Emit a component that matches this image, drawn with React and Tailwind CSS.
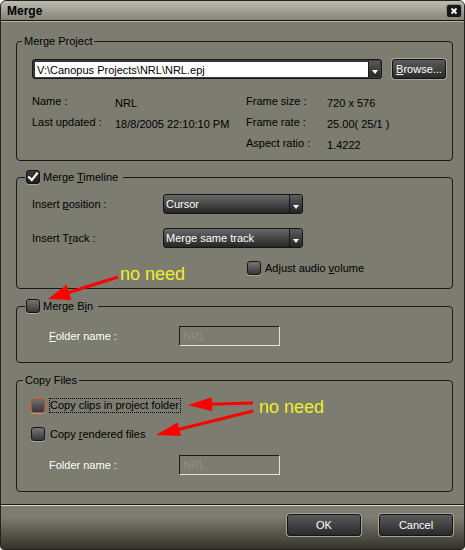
import React from "react";

function Check({ checked = false, focus = false }) {
  const cls = focus
    ? "border-[#c8461a] from-[#6e6e6e] to-[#363636]"
    : checked
    ? "border-[#141414] from-[#3c3c3c] to-[#1c1c1c]"
    : "border-[#141414] from-[#767676] to-[#383838]";
  return (
    <span
      className={`w-[14px] h-[14px] shrink-0 rounded-[3px] border bg-gradient-to-b ${cls} flex items-center justify-center shadow-[0_1px_0_#a8a89c]`}
    >
      {checked && (
        <svg width="12" height="12" viewBox="0 0 12 12">
          <path d="M2 6.2 L4.8 9 L10 2.5" stroke="white" strokeWidth="2.2" fill="none" strokeLinecap="square" />
        </svg>
      )}
    </span>
  );
}

function DownArrow() {
  return (
    <svg width="6" height="4" viewBox="0 0 6 4">
      <path d="M0 0 H6 L3 4 Z" fill="white" />
    </svg>
  );
}

function Drop({ text }) {
  return (
    <div className="w-[140px] h-[20px] rounded-[3px] border border-[#141414] bg-gradient-to-b from-[#6a6a6a] to-[#262626] flex overflow-hidden">
      <span className="flex-1 text-white pl-[2px] leading-[18px]">{text}</span>
      <span className="w-[13px] border-l border-[#141414] bg-gradient-to-b from-[#5e5e5e] to-[#242424] flex items-end justify-center pb-[4px]">
        <DownArrow />
      </span>
    </div>
  );
}

function Field() {
  return (
    <div className="w-[101px] h-[20px] border border-t-[#1c1c1c] border-l-[#1c1c1c] border-r-[#e4e4dc] border-b-[#e4e4dc] pl-[3px] leading-[18px] text-[#8e8e84]">
      NRL
    </div>
  );
}

function Btn({ children, w = "w-[74px]", h = "h-[22px]" }) {
  return (
    <div
      className={`${w} ${h} shrink-0 rounded-[3px] border border-[#141414] bg-gradient-to-b from-[#5c5c5c] to-[#2a2a2a] text-white flex items-center justify-center shadow-[0_0_0_1px_#a4a498]`}
    >
      {children}
    </div>
  );
}

function Arrow({ x1, y1, x2, y2, len, hw }) {
  const dx = x2 - x1;
  const dy = y2 - y1;
  const L = Math.hypot(dx, dy);
  const ux = dx / L;
  const uy = dy / L;
  const bx = x2 - ux * len;
  const by = y2 - uy * len;
  const px = -uy * hw;
  const py = ux * hw;
  return (
    <g>
      <line x1={x1} y1={y1} x2={bx + ux * 2} y2={by + uy * 2} stroke="#ff0000" strokeWidth="3" />
      <polygon points={`${x2},${y2} ${bx + px},${by + py} ${bx - px},${by - py}`} fill="#ff0000" />
    </g>
  );
}

export default function App() {
  return (
    <div className="relative w-[465px] h-[550px] font-['Liberation_Sans',Arial,sans-serif] text-[11px] text-black">
      <div className="w-full h-full flex flex-col bg-[#7c7c70] border border-[#24241e] rounded-t-[6px] rounded-b-[4px] overflow-hidden">
        {/* Title bar */}
        <div className="h-[19px] shrink-0 flex items-center justify-between pl-[6px] pr-[2px] bg-gradient-to-b from-[#bcbcb0] to-[#84847a]">
          <span className="font-bold text-[12px] leading-none">Merge</span>
          <span className="w-[16px] h-[14px] rounded-[3px] bg-[#161616] border border-[#8c8c82] flex items-center justify-center">
            <svg width="8" height="8" viewBox="0 0 8 8">
              <path d="M1.5 1.5 L6.5 6.5 M6.5 1.5 L1.5 6.5" stroke="white" strokeWidth="1.8" />
            </svg>
          </span>
        </div>
        <div className="h-px shrink-0 bg-[#16160f]" />
        <div className="h-px shrink-0 bg-[#b4b4aa]" />

        {/* Groups */}
        <div className="h-[482px] shrink-0 flex flex-col pl-[15px] pr-[11px] pt-[12px]">
          {/* Merge Project */}
          <fieldset className="h-[127px] shrink-0 border border-[#1a1a16] rounded-[4px] p-0 m-0 min-w-0">
            <legend className="ml-[5px] px-[2px] leading-[14px]">Merge Project</legend>
            <div className="pl-[15px] pr-[5px]">
              <div className="mt-[11px] flex gap-[10px]">
                <div className="w-[350px] h-[20px] rounded-[3px] border border-[#181818] bg-[#3c3c3c] flex p-[1px]">
                  <div className="flex-1 bg-white border-t border-l border-[#303030] pl-[2px] leading-[16px] text-black whitespace-nowrap overflow-hidden">
                    V:\Canopus Projects\NRL\NRL.epj
                  </div>
                  <div className="w-[12px] bg-gradient-to-b from-[#5a5a5a] to-[#262626] border-l border-[#181818] flex items-end justify-center pb-[3px]">
                    <DownArrow />
                  </div>
                </div>
                <Btn w="w-[54px]" h="h-[20px]">
                  <span>
                    <span className="underline">B</span>rowse...
                  </span>
                </Btn>
              </div>
              <div className="mt-[13px] grid grid-cols-[83px_131px_81px_1fr] auto-rows-[21px] leading-[19px] whitespace-nowrap">
                <span>Name :</span>
                <span className="pt-[2px]">NRL</span>
                <span>Frame size :</span>
                <span className="pt-[2px]">720 x 576</span>
                <span>Last updated :</span>
                <span className="pt-[2px]">18/8/2005 22:10:10 PM</span>
                <span>Frame rate :</span>
                <span className="pt-[2px] whitespace-pre">25.00( 25/1 )</span>
                <span></span>
                <span></span>
                <span>Aspect ratio :</span>
                <span className="pt-[2px]">1.4222</span>
              </div>
            </div>
          </fieldset>

          {/* Merge Timeline */}
          <fieldset className="mt-[9px] h-[119px] shrink-0 border border-[#1a1a16] rounded-[4px] p-0 min-w-0">
            <legend className="ml-[8px] pl-[1px] pr-[5px]">
              <span className="flex items-center gap-[3px] leading-[14px]">
                <Check checked />
                <span>
                  Merge <span className="underline">T</span>imeline
                </span>
              </span>
            </legend>
            <div className="pl-[15px]">
              <div className="mt-[10px] flex items-center h-[20px]">
                <span className="w-[131px]">
                  Insert <span className="underline">p</span>osition :
                </span>
                <Drop text="Cursor" />
              </div>
              <div className="mt-[14px] flex items-center h-[20px]">
                <span className="w-[131px]">
                  Insert T<span className="underline">r</span>ack :
                </span>
                <Drop text="Merge same track" />
              </div>
              <div className="mt-[13px] flex items-center gap-[4px] pl-[215px] leading-[14px]">
                <Check />
                <span>
                  Adjust audio <span className="underline">v</span>olume
                </span>
              </div>
            </div>
          </fieldset>

          {/* Merge Bin */}
          <fieldset className="mt-[10px] h-[64px] shrink-0 border border-[#1a1a16] rounded-[4px] p-0 min-w-0">
            <legend className="ml-[8px] pl-[1px] pr-[5px]">
              <span className="flex items-center gap-[3px] leading-[14px]">
                <Check />
                <span>
                  Merge B<span className="underline">i</span>n
                </span>
              </span>
            </legend>
            <div className="pl-[32px] mt-[13px] flex items-center">
              <span className="w-[130px] text-white">
                <span className="underline">F</span>older name :
              </span>
              <Field />
            </div>
          </fieldset>

          {/* Copy Files */}
          <fieldset className="mt-[10px] h-[119px] shrink-0 border border-[#1a1a16] rounded-[4px] p-0 min-w-0">
            <legend className="ml-[6px] px-[2px] leading-[14px]">Copy Files</legend>
            <div className="pl-[14px]">
              <div className="mt-[11px] flex items-center h-[15px] gap-[4px]">
                <Check focus />
                <span className="h-[15px] border border-dotted border-black leading-[13px] pr-[1px]">
                  Copy clips in project folder
                </span>
              </div>
              <div className="mt-[14px] flex items-center gap-[5px] leading-[14px]">
                <Check />
                <span>
                  Copy <span className="underline">r</span>endered files
                </span>
              </div>
              <div className="mt-[14px] pl-[18px] flex items-center">
                <span className="w-[130px] text-white">Folder name :</span>
                <Field />
              </div>
            </div>
          </fieldset>
        </div>

        <div className="h-px shrink-0 bg-[#16160f]" />
        <div className="h-px shrink-0 bg-[#dcdcd4]" />

        {/* Bottom buttons */}
        <div className="flex-1 flex justify-end items-start gap-[18px] pt-[8px] pr-[11px] bg-[linear-gradient(to_bottom,#7c7c70_25%,#33332a_100%)]">
          <Btn>OK</Btn>
          <Btn>Cancel</Btn>
        </div>
      </div>

      {/* Annotations */}
      <svg className="absolute inset-0 pointer-events-none" width="465" height="550" viewBox="0 0 465 550">
        <Arrow x1={118} y1={277} x2={48} y2={299} len={22} hw={8} />
        <Arrow x1={253} y1={403} x2={188} y2={405} len={24} hw={7} />
        <Arrow x1={253} y1={411} x2={156} y2={435} len={24} hw={7} />
      </svg>
      <span className="absolute left-[120px] top-[265px] text-[18px] leading-[18px] text-[#f0f028]">no need</span>
      <span className="absolute left-[259px] top-[398px] text-[18px] leading-[18px] text-[#f0f028]">no need</span>
    </div>
  );
}
